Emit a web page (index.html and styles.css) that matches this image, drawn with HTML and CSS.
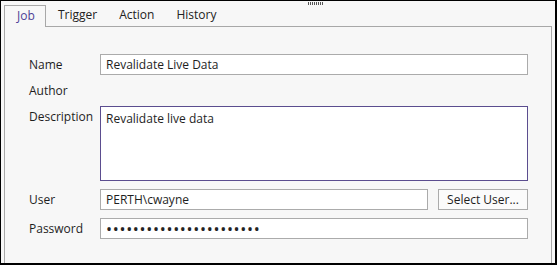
FILE: index.html
```html
<!DOCTYPE html>
<html lang="en">
<head>
  <meta charset="UTF-8">
  <title>Task Properties</title>
  <link rel="stylesheet" href="styles.css">
</head>
<body>

  <div class="window">
    <div class="grip"></div>

    <div class="tabs">
      <div class="tab active">Job</div>
      <div class="tab">Trigger</div>
      <div class="tab">Action</div>
      <div class="tab">History</div>
    </div>

    <div class="panel">
      <div class="form">
        <label for="name">Name</label>
        <input type="text" id="name" value="Revalidate Live Data">

        <label class="plain">Author</label>
        <div></div>

        <label for="description" class="top">Description</label>
        <textarea id="description">Revalidate live data</textarea>

        <label for="user">User</label>
        <div class="user-row">
          <input type="text" id="user" value="PERTH\cwayne">
          <button class="select-user">Select User...</button>
        </div>

        <label for="password">Password</label>
        <input type="password" id="password" value="xxxxxxxxxxxxxxxxxxxxxxx">
      </div>
    </div>
  </div>

</body>
</html>
```

FILE: styles.css
```css
* {
  box-sizing: border-box;
}

body {
  margin: 0;
  font-family: "Open Sans", sans-serif;
  font-size: 12px;
  color: #1e1e1e;
  background: #f7f7f7;
}

.window {
  position: relative;
  width: 557px;
  height: 265px;
  overflow: hidden;
  background: #f7f7f7;
  border: 1px solid #000;
  border-right-width: 2px;
  border-bottom-width: 2px;
  padding: 4px 3px 0 3px;
}

/* little resize grip at the top edge */
.grip {
  position: absolute;
  top: 1px;
  left: 307px;
  width: 15px;
  height: 3px;
  background: repeating-linear-gradient(90deg, #555 0 1px, transparent 1px 2px);
}

.tabs {
  display: flex;
  height: 21px;
}

.tab {
  padding: 0 11px;
  line-height: 20px;
  color: #222;
}

.tab.active {
  padding: 0 0 0 12px;
  width: 42px;
  border: 1px solid #a8a8a8;
  border-bottom: none;
  color: #4d3f96;
  background: #f7f7f7;
  position: relative;
  z-index: 1;
  height: 22px;
}

.tab:nth-child(2) {
  padding-left: 12px;
}

.panel {
  border: 1px solid #a8a8a8;
  height: 260px;
  padding: 27px 23px 0 24px;
}

.form {
  display: grid;
  grid-template-columns: 71px 1fr;
  row-gap: 8px;
  align-items: center;
}

label {
  line-height: 15px;
}

label.plain {
  height: 15px;
}

label.top {
  align-self: start;
  padding-top: 3px;
}

input, textarea, button {
  font-family: "Open Sans", sans-serif;
  font-size: 12px;
  color: #1e1e1e;
}

input {
  height: 21px;
  width: 100%;
  border: 1px solid #ababab;
  background: #fff;
  padding: 0 5px;
  outline: none;
}

textarea {
  height: 75px;
  width: 100%;
  border: 1px solid #5b4d8f;
  background: #fff;
  padding: 3px 5px;
  resize: none;
  outline: none;
}

.user-row {
  display: flex;
  gap: 10px;
}

.user-row input {
  flex: 1;
}

.select-user {
  width: 90px;
  height: 21px;
  border: 1px solid #ababab;
  background: #fbfbfb;
  padding: 0;
}

#password {
  font-size: 16px;
  letter-spacing: 0.7px;
  color: #222;
}
```
